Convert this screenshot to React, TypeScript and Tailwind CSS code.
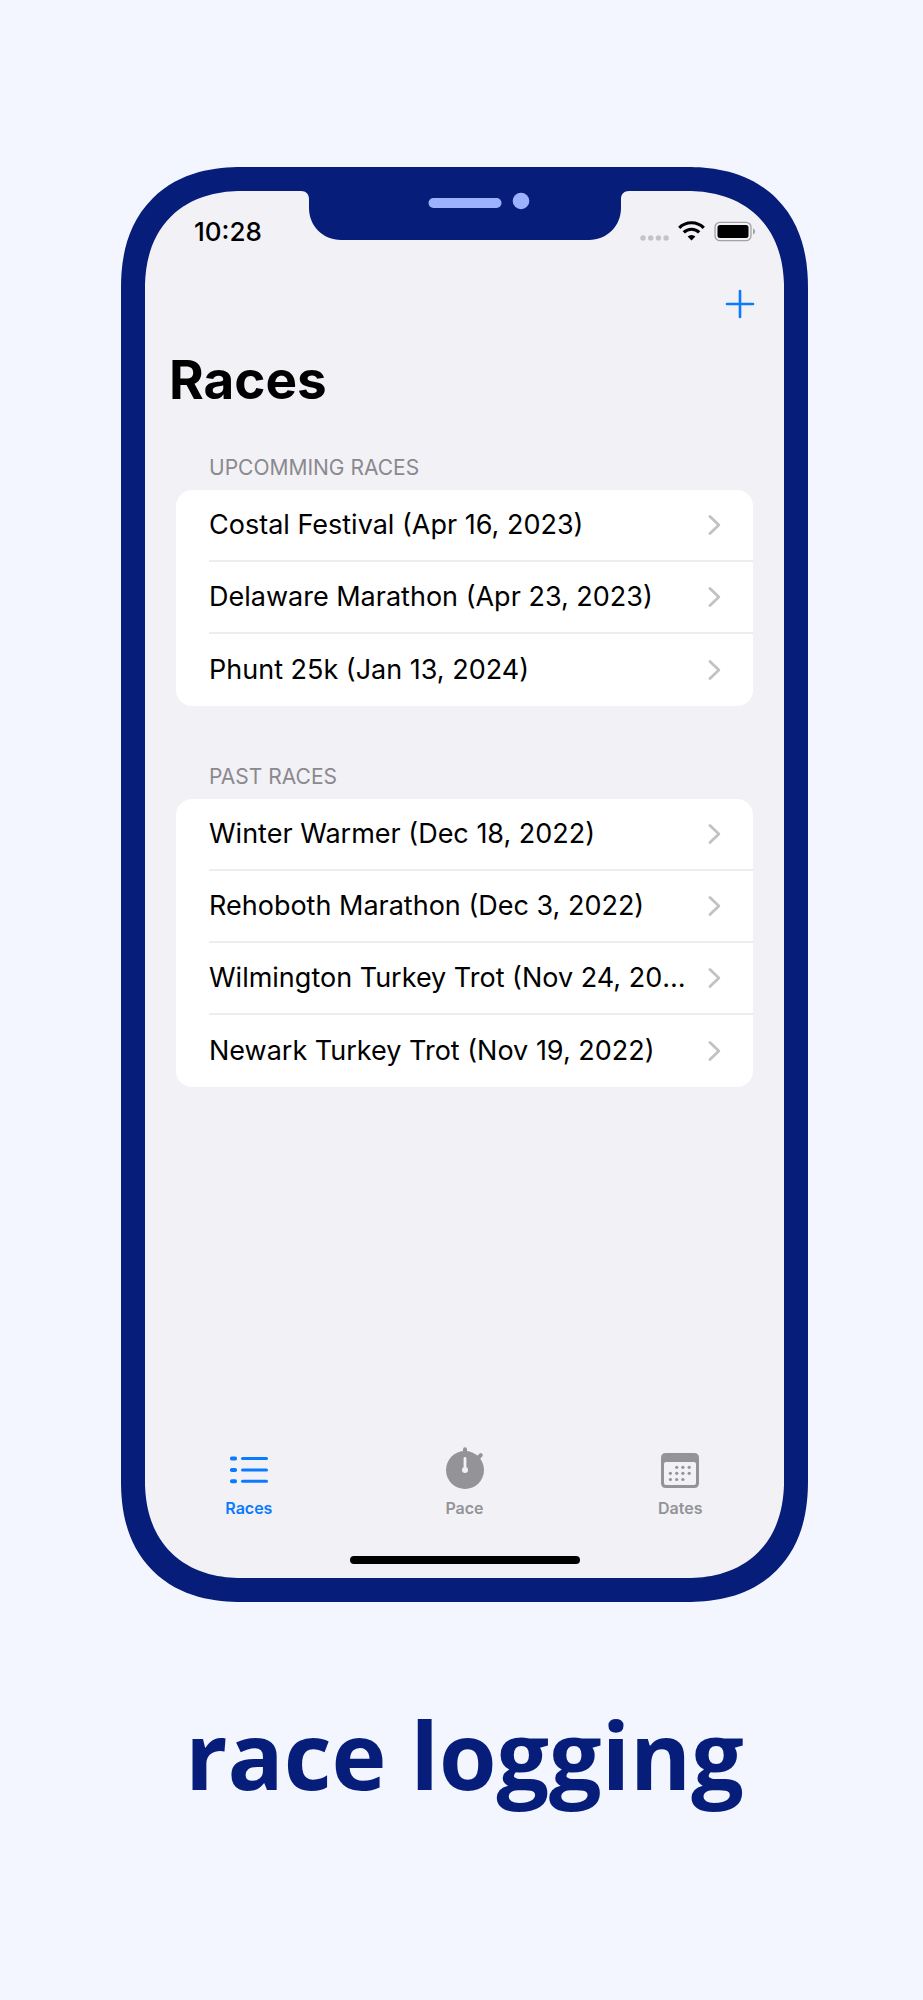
import React from 'react';

interface Race {
  name: string;
  date: string;
}

interface RaceSectionProps {
  title: string;
  races: Race[];
}

interface TabProps {
  label: string;
  icon: React.ReactNode;
  active?: boolean;
}

const upcoming: Race[] = [
  { name: 'Costal Festival', date: 'Apr 16, 2023' },
  { name: 'Delaware Marathon', date: 'Apr 23, 2023' },
  { name: 'Phunt 25k', date: 'Jan 13, 2024' },
];

const past: Race[] = [
  { name: 'Winter Warmer', date: 'Dec 18, 2022' },
  { name: 'Rehoboth Marathon', date: 'Dec 3, 2022' },
  { name: 'Wilmington Turkey Trot', date: 'Nov 24, 2022' },
  { name: 'Newark Turkey Trot', date: 'Nov 19, 2022' },
];

/** Notch with rounded shoulders, speaker and camera */
const Notch = () => (
  <svg width="328" height="49" viewBox="0 0 328 49" className="shrink-0" aria-hidden="true">
    <path
      d="M0 0C5 0 8 3 8 8V17C8 35 22 49 40 49H288C306 49 320 35 320 17V8C320 3 323 0 328 0Z"
      fill="#071d7a"
    />
    <rect x="127.5" y="7" width="73" height="10" rx="5" fill="#9db2ff" />
    <circle cx="220" cy="10" r="8.3" fill="#9db2ff" />
  </svg>
);

const StatusIcons = () => (
  <svg width="116" height="22" viewBox="0 0 116 22" aria-hidden="true">
    <g fill="#c4c3c8">
      <circle cx="3" cy="18" r="2.7" />
      <circle cx="10.7" cy="18" r="2.7" />
      <circle cx="18.4" cy="18" r="2.7" />
      <circle cx="26.1" cy="18" r="2.7" />
    </g>
    <g fill="none" stroke="#000" strokeWidth="3.2">
      <path d="M39.2 7.8A17.5 17.5 0 0 1 63.8 7.8" />
      <path d="M43.8 12.4A11 11 0 0 1 59.2 12.4" />
    </g>
    <path d="M47.6 16.4A5.8 5.8 0 0 1 55.4 16.4L51.5 20.4Z" fill="#000" />
    <rect x="75" y="2.3" width="36" height="18.4" rx="5" fill="none" stroke="#a2a1a5" strokeWidth="1.3" />
    <rect x="77.5" y="5" width="31" height="13" rx="2.5" fill="#000" />
    <path d="M113 8.5C115.8 9.3 115.8 13.7 113 14.5Z" fill="#a2a1a5" />
  </svg>
);

const ChevronIcon = () => (
  <svg width="13" height="20" viewBox="0 0 13 20" className="shrink-0" aria-hidden="true">
    <path
      d="M2 1.5L10.8 10L2 18.5"
      fill="none"
      stroke="#c2c2c4"
      strokeWidth="2.8"
      strokeLinecap="round"
      strokeLinejoin="round"
    />
  </svg>
);

const ListIcon = () => (
  <svg width="40" height="44" viewBox="0 0 40 44" fill="currentColor" aria-hidden="true">
    {[12.5, 24, 35.3].map((y) => (
      <g key={y}>
        <rect x="1" y={y - 2} width="7" height="4" rx="1.8" />
        <rect x="12" y={y - 1.5} width="27" height="3" rx="1.5" />
      </g>
    ))}
  </svg>
);

const StopwatchIcon = () => (
  <svg width="40" height="44" viewBox="0 0 40 44" aria-hidden="true">
    <circle cx="20" cy="24" r="19" fill="currentColor" />
    <path
      d="M20 3.2V8M33.5 11.5L35.8 9.2"
      stroke="currentColor"
      strokeWidth="4"
      strokeLinecap="round"
    />
    <path d="M20 12.5V22" stroke="#f2f1f6" strokeWidth="2.8" strokeLinecap="round" />
    <circle cx="20" cy="24" r="3" fill="#f2f1f6" />
  </svg>
);

const CalendarIcon = () => (
  <svg width="40" height="44" viewBox="0 0 40 44" fill="currentColor" aria-hidden="true">
    <path
      fillRule="evenodd"
      d="M6 7H34Q39 7 39 12V37Q39 42 34 42H6Q1 42 1 37V12Q1 7 6 7ZM6 16Q4 16 4 18V37Q4 39 6 39H34Q36 39 36 37V18Q36 16 34 16Z"
    />
    <circle cx="16.7" cy="21.3" r="1.6" />
    <circle cx="22.9" cy="21.3" r="1.6" />
    <circle cx="29.2" cy="21.3" r="1.6" />
    <circle cx="10.4" cy="27.3" r="1.6" />
    <circle cx="16.7" cy="27.3" r="1.6" />
    <circle cx="22.9" cy="27.3" r="1.6" />
    <circle cx="29.2" cy="27.3" r="1.6" />
    <circle cx="10.4" cy="33.5" r="1.6" />
    <circle cx="16.7" cy="33.5" r="1.6" />
    <circle cx="22.9" cy="33.5" r="1.6" />
  </svg>
);

const RaceSection: React.FC<RaceSectionProps> = ({ title, races }) => (
  <section className="px-[31px]">
    <h2 className="pl-[33px] pb-1.5 text-[21px] leading-8 text-[#8a898e] uppercase">{title}</h2>
    <ul className="overflow-hidden rounded-2xl bg-white">
      {races.map((race, i) => (
        <li key={race.name} className="pl-[33px]">
          <a
            href="#"
            className={`flex h-[72px] items-center justify-between gap-4 pr-8 ${
              i < races.length - 1 ? 'border-b-2 border-[#ededee]' : ''
            }`}
          >
            <span className="truncate text-[27px] leading-9 text-black">
              {`${race.name} (${race.date})`}
            </span>
            <ChevronIcon />
          </a>
        </li>
      ))}
    </ul>
  </section>
);

const Tab: React.FC<TabProps> = ({ label, icon, active = false }) => (
  <button
    type="button"
    className={`flex flex-1 flex-col items-center gap-1.5 text-base leading-6 font-semibold ${
      active ? 'text-[#0a7aff]' : 'text-[#939398]'
    }`}
  >
    {icon}
    {label}
  </button>
);

export default function App() {
  return (
    <div className="min-h-screen bg-[#f3f6ff] pt-[167px] pr-[115px] pb-[170px] pl-[121px] font-['Inter',sans-serif]">
      <main className="flex min-h-[1435px] flex-col overflow-hidden rounded-[121px] border-24 border-[#071d7a] bg-[#f2f1f6] [corner-shape:superellipse(1.2)]">
        <div className="grid grid-cols-[1fr_328px_1fr]">
          <div className="pt-[25px] pl-[49px] text-[26px] leading-8 font-medium text-black">10:28</div>
          <Notch />
          <div className="flex justify-end pt-[29px] pr-7">
            <StatusIcons />
          </div>
        </div>

        <header className="flex flex-col px-6">
          <button type="button" aria-label="Add race" className="mt-9 self-end p-1">
            <svg width="32" height="32" viewBox="0 0 32 32" aria-hidden="true">
              <path d="M16 3V29M3 16H29" stroke="#0a7aff" strokeWidth="2.6" strokeLinecap="round" />
            </svg>
          </button>
          <h1 className="mt-6 text-[53px] leading-[64px] font-bold text-black">Races</h1>
        </header>

        <div className="mt-10 flex flex-col gap-[55px]">
          <RaceSection title="Upcomming Races" races={upcoming} />
          <RaceSection title="Past Races" races={past} />
        </div>

        <nav className="-mx-1 mt-auto flex">
          <Tab label="Races" icon={<ListIcon />} active />
          <Tab label="Pace" icon={<StopwatchIcon />} />
          <Tab label="Dates" icon={<CalendarIcon />} />
        </nav>
        <div className="mt-9 mb-3.5 h-2 w-[230px] self-center rounded-full bg-black" />
      </main>

      <p className="mt-[77px] text-center font-['Open_Sans',sans-serif] text-[93px] leading-[150px] font-bold whitespace-nowrap text-[#071d7a]">
        race logging
      </p>
    </div>
  );
}
